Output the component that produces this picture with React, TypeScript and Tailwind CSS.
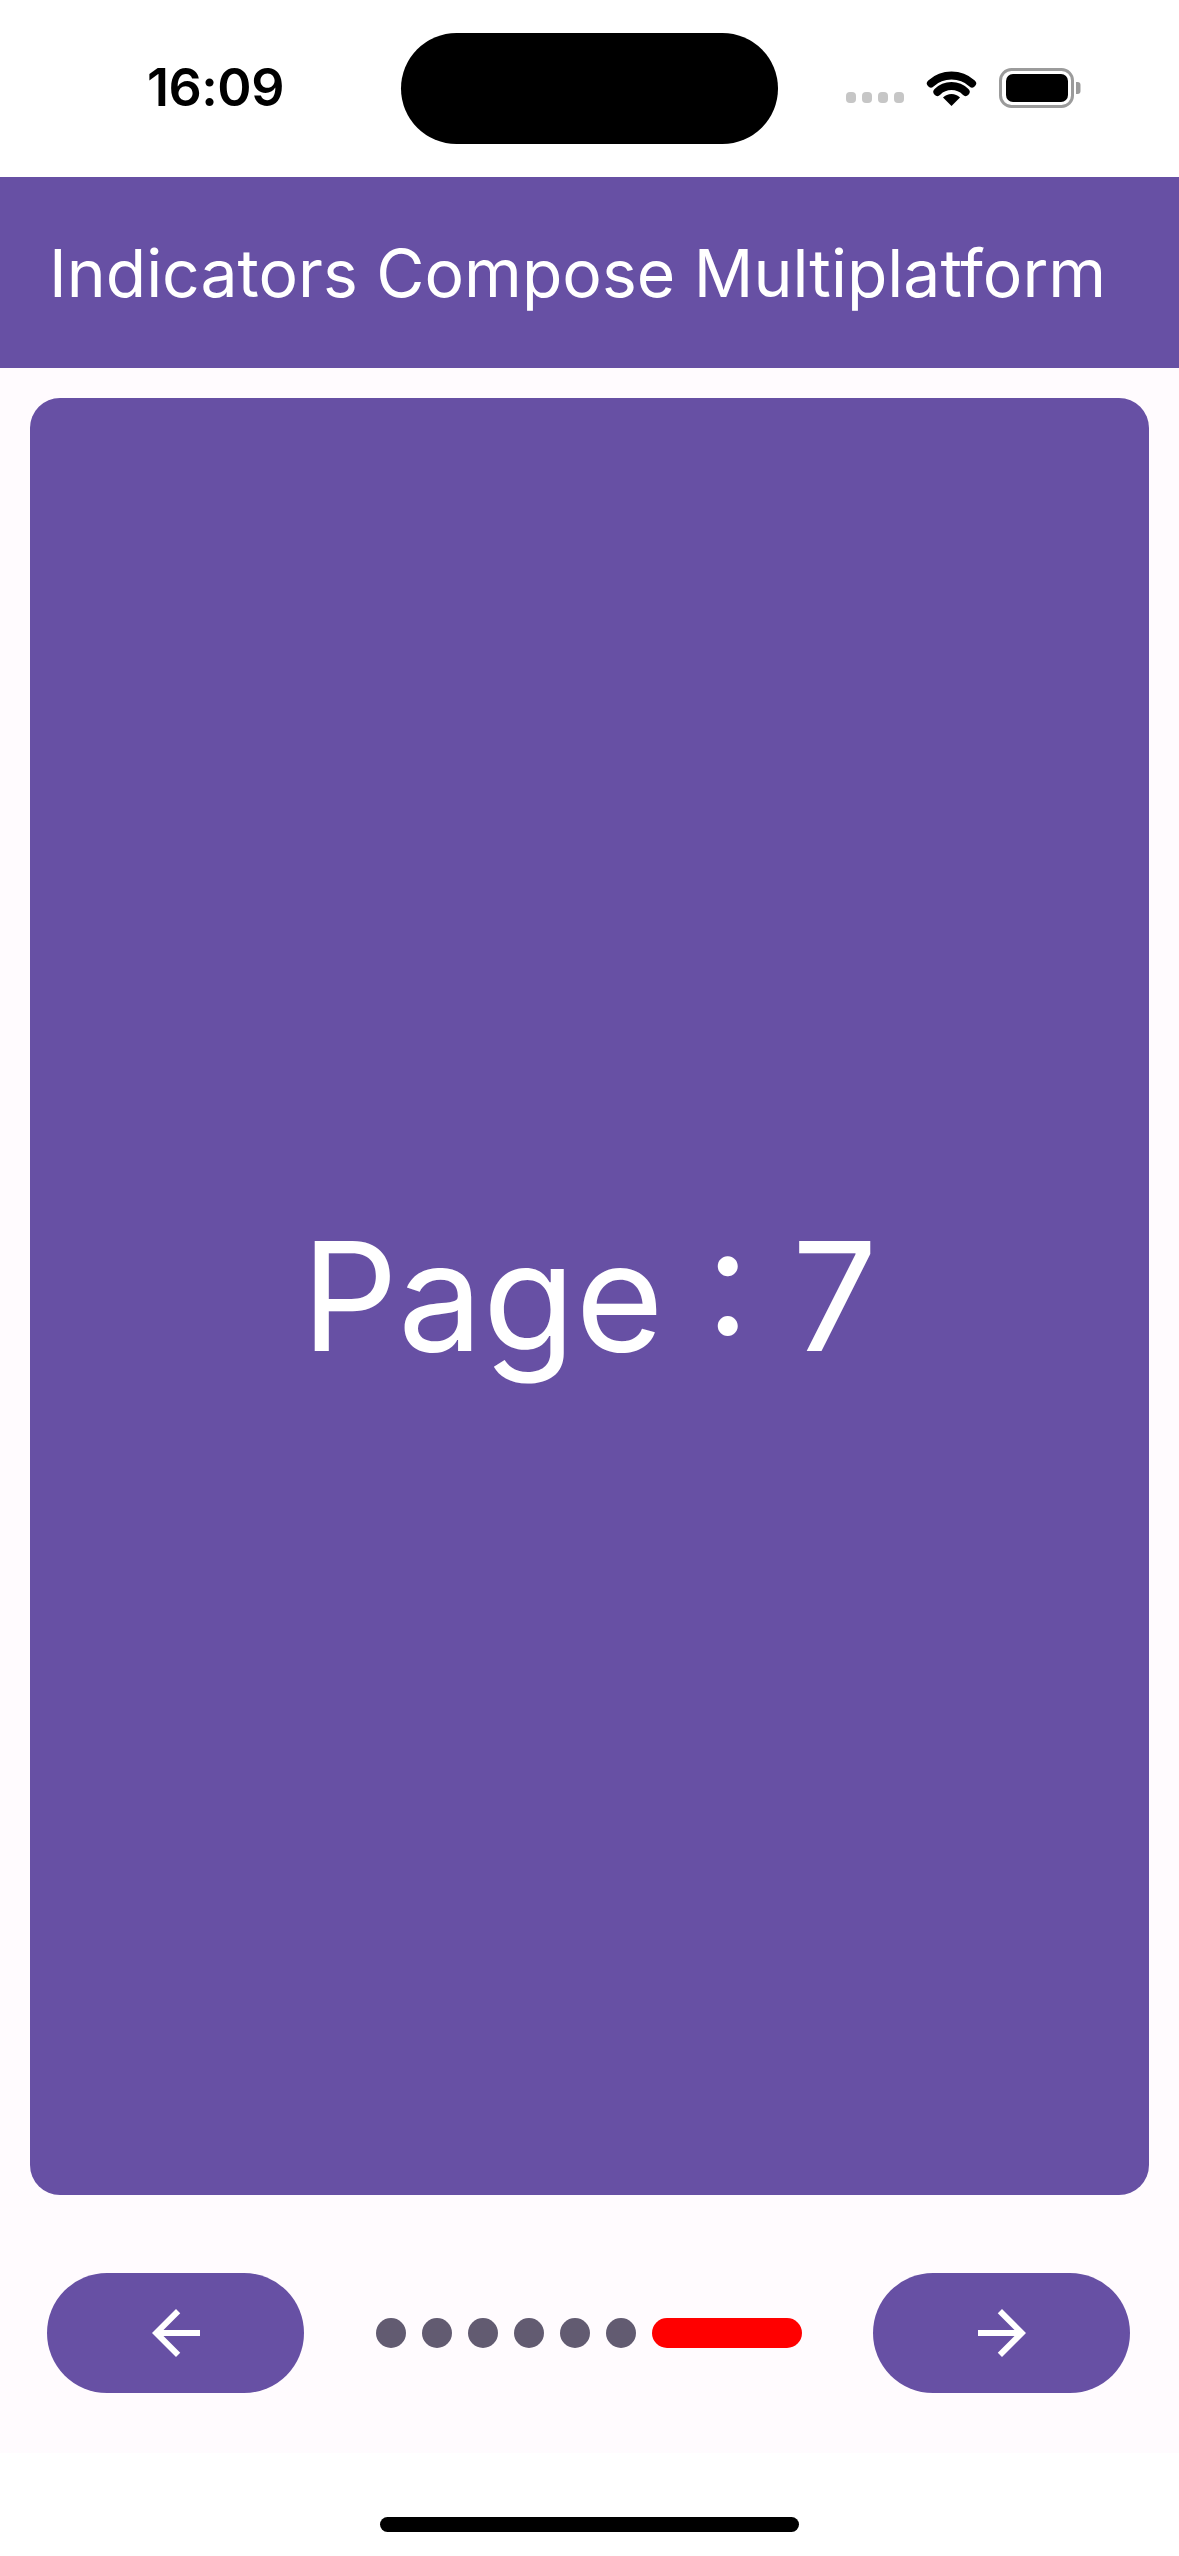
import React from "react";

function WifiIcon() {
  return (
    <svg width="51" height="38" viewBox="0 0 51 38" fill="none">
      <path d="M25.5 37 L17 28.5 A12 12 0 0 1 34 28.5 Z" fill="#000" />
      <path
        d="M11.4 22.9 A20 20 0 0 1 39.6 22.9"
        stroke="#000"
        strokeWidth="8"
        strokeLinecap="round"
      />
      <path
        d="M4.9 14.4 A31 31 0 0 1 46.1 14.4"
        stroke="#000"
        strokeWidth="8"
        strokeLinecap="round"
      />
    </svg>
  );
}

function BatteryIcon() {
  return (
    <svg width="84" height="40" viewBox="0 0 84 40" fill="none">
      <rect x="1.5" y="1.5" width="72" height="37" rx="11" stroke="#9b9b9b" strokeWidth="3" />
      <rect x="7" y="6" width="62" height="28" rx="7" fill="#000" />
      <path d="M77 14 h1.5 a3 3 0 0 1 3 3 v6 a3 3 0 0 1 -3 3 h-1.5 z" fill="#9b9b9b" />
    </svg>
  );
}

function ArrowBack() {
  return (
    <svg width="72" height="72" viewBox="0 0 24 24" fill="#fff">
      <path d="M20 11H7.83l5.59-5.59L12 4l-8 8 8 8 1.41-1.41L7.83 13H20v-2z" />
    </svg>
  );
}

function ArrowForward() {
  return (
    <svg width="72" height="72" viewBox="0 0 24 24" fill="#fff">
      <path d="M12 4l-1.41 1.41L16.17 11H4v2h12.17l-5.58 5.59L12 20l8-8z" />
    </svg>
  );
}

const pages = [0, 1, 2, 3, 4, 5, 6];
const current = 6;

export default function App() {
  return (
    <div className="w-[1179px] h-[2556px] bg-white flex flex-col font-['Inter',sans-serif] overflow-hidden">
      {/* status bar */}
      <div className="relative h-[177px] shrink-0 bg-white">
        <div className="absolute left-[401px] top-[33px] w-[377px] h-[111px] rounded-full bg-black" />
        <div className="flex items-center h-[176px] pl-[147px] pr-[96px] justify-between">
          <span className="text-[52px] font-semibold tracking-[-0.5px] text-black leading-none">
            16:09
          </span>
          <div className="flex items-center gap-[22px]">
            <div className="flex items-center gap-[6px] mt-[18px]">
              <span className="w-[10px] h-[11px] rounded-[4px] bg-[#c6c6c6]" />
              <span className="w-[10px] h-[11px] rounded-[4px] bg-[#c6c6c6]" />
              <span className="w-[10px] h-[11px] rounded-[4px] bg-[#c6c6c6]" />
              <span className="w-[10px] h-[11px] rounded-[4px] bg-[#c6c6c6]" />
            </div>
            <WifiIcon />
            <BatteryIcon />
          </div>
        </div>
      </div>

      {/* top app bar */}
      <div className="h-[191px] shrink-0 bg-[#6750A4] flex items-center pl-[49px]">
        <h1 className="text-[66px] font-normal text-white leading-none">
          Indicators Compose Multiplatform
        </h1>
      </div>

      {/* content */}
      <div className="h-[2085px] shrink-0 bg-[#FFFBFE] flex flex-col">
        <div className="mt-[30px] mx-[30px] h-[1797px] rounded-[30px] bg-[#6750A4] flex items-center justify-center">
          <span className="text-[151px] text-white leading-none">Page : 7</span>
        </div>

        <div className="mt-[78px] flex items-center justify-between pl-[47px] pr-[49px]">
          <button
            type="button"
            className="w-[257px] h-[120px] rounded-full bg-[#6750A4] flex items-center justify-center"
          >
            <ArrowBack />
          </button>
          <div className="flex items-center gap-[16px]">
            {pages.map((p) =>
              p === current ? (
                <span key={p} className="w-[150px] h-[30px] rounded-full bg-[#FF0000]" />
              ) : (
                <span key={p} className="w-[30px] h-[30px] rounded-full bg-[#625B71]" />
              )
            )}
          </div>
          <button
            type="button"
            className="w-[257px] h-[120px] rounded-full bg-[#6750A4] flex items-center justify-center"
          >
            <ArrowForward />
          </button>
        </div>
      </div>

      {/* home indicator */}
      <div className="flex-1 bg-white flex justify-center pt-[64px]">
        <div className="w-[419px] h-[15px] rounded-full bg-black" />
      </div>
    </div>
  );
}
